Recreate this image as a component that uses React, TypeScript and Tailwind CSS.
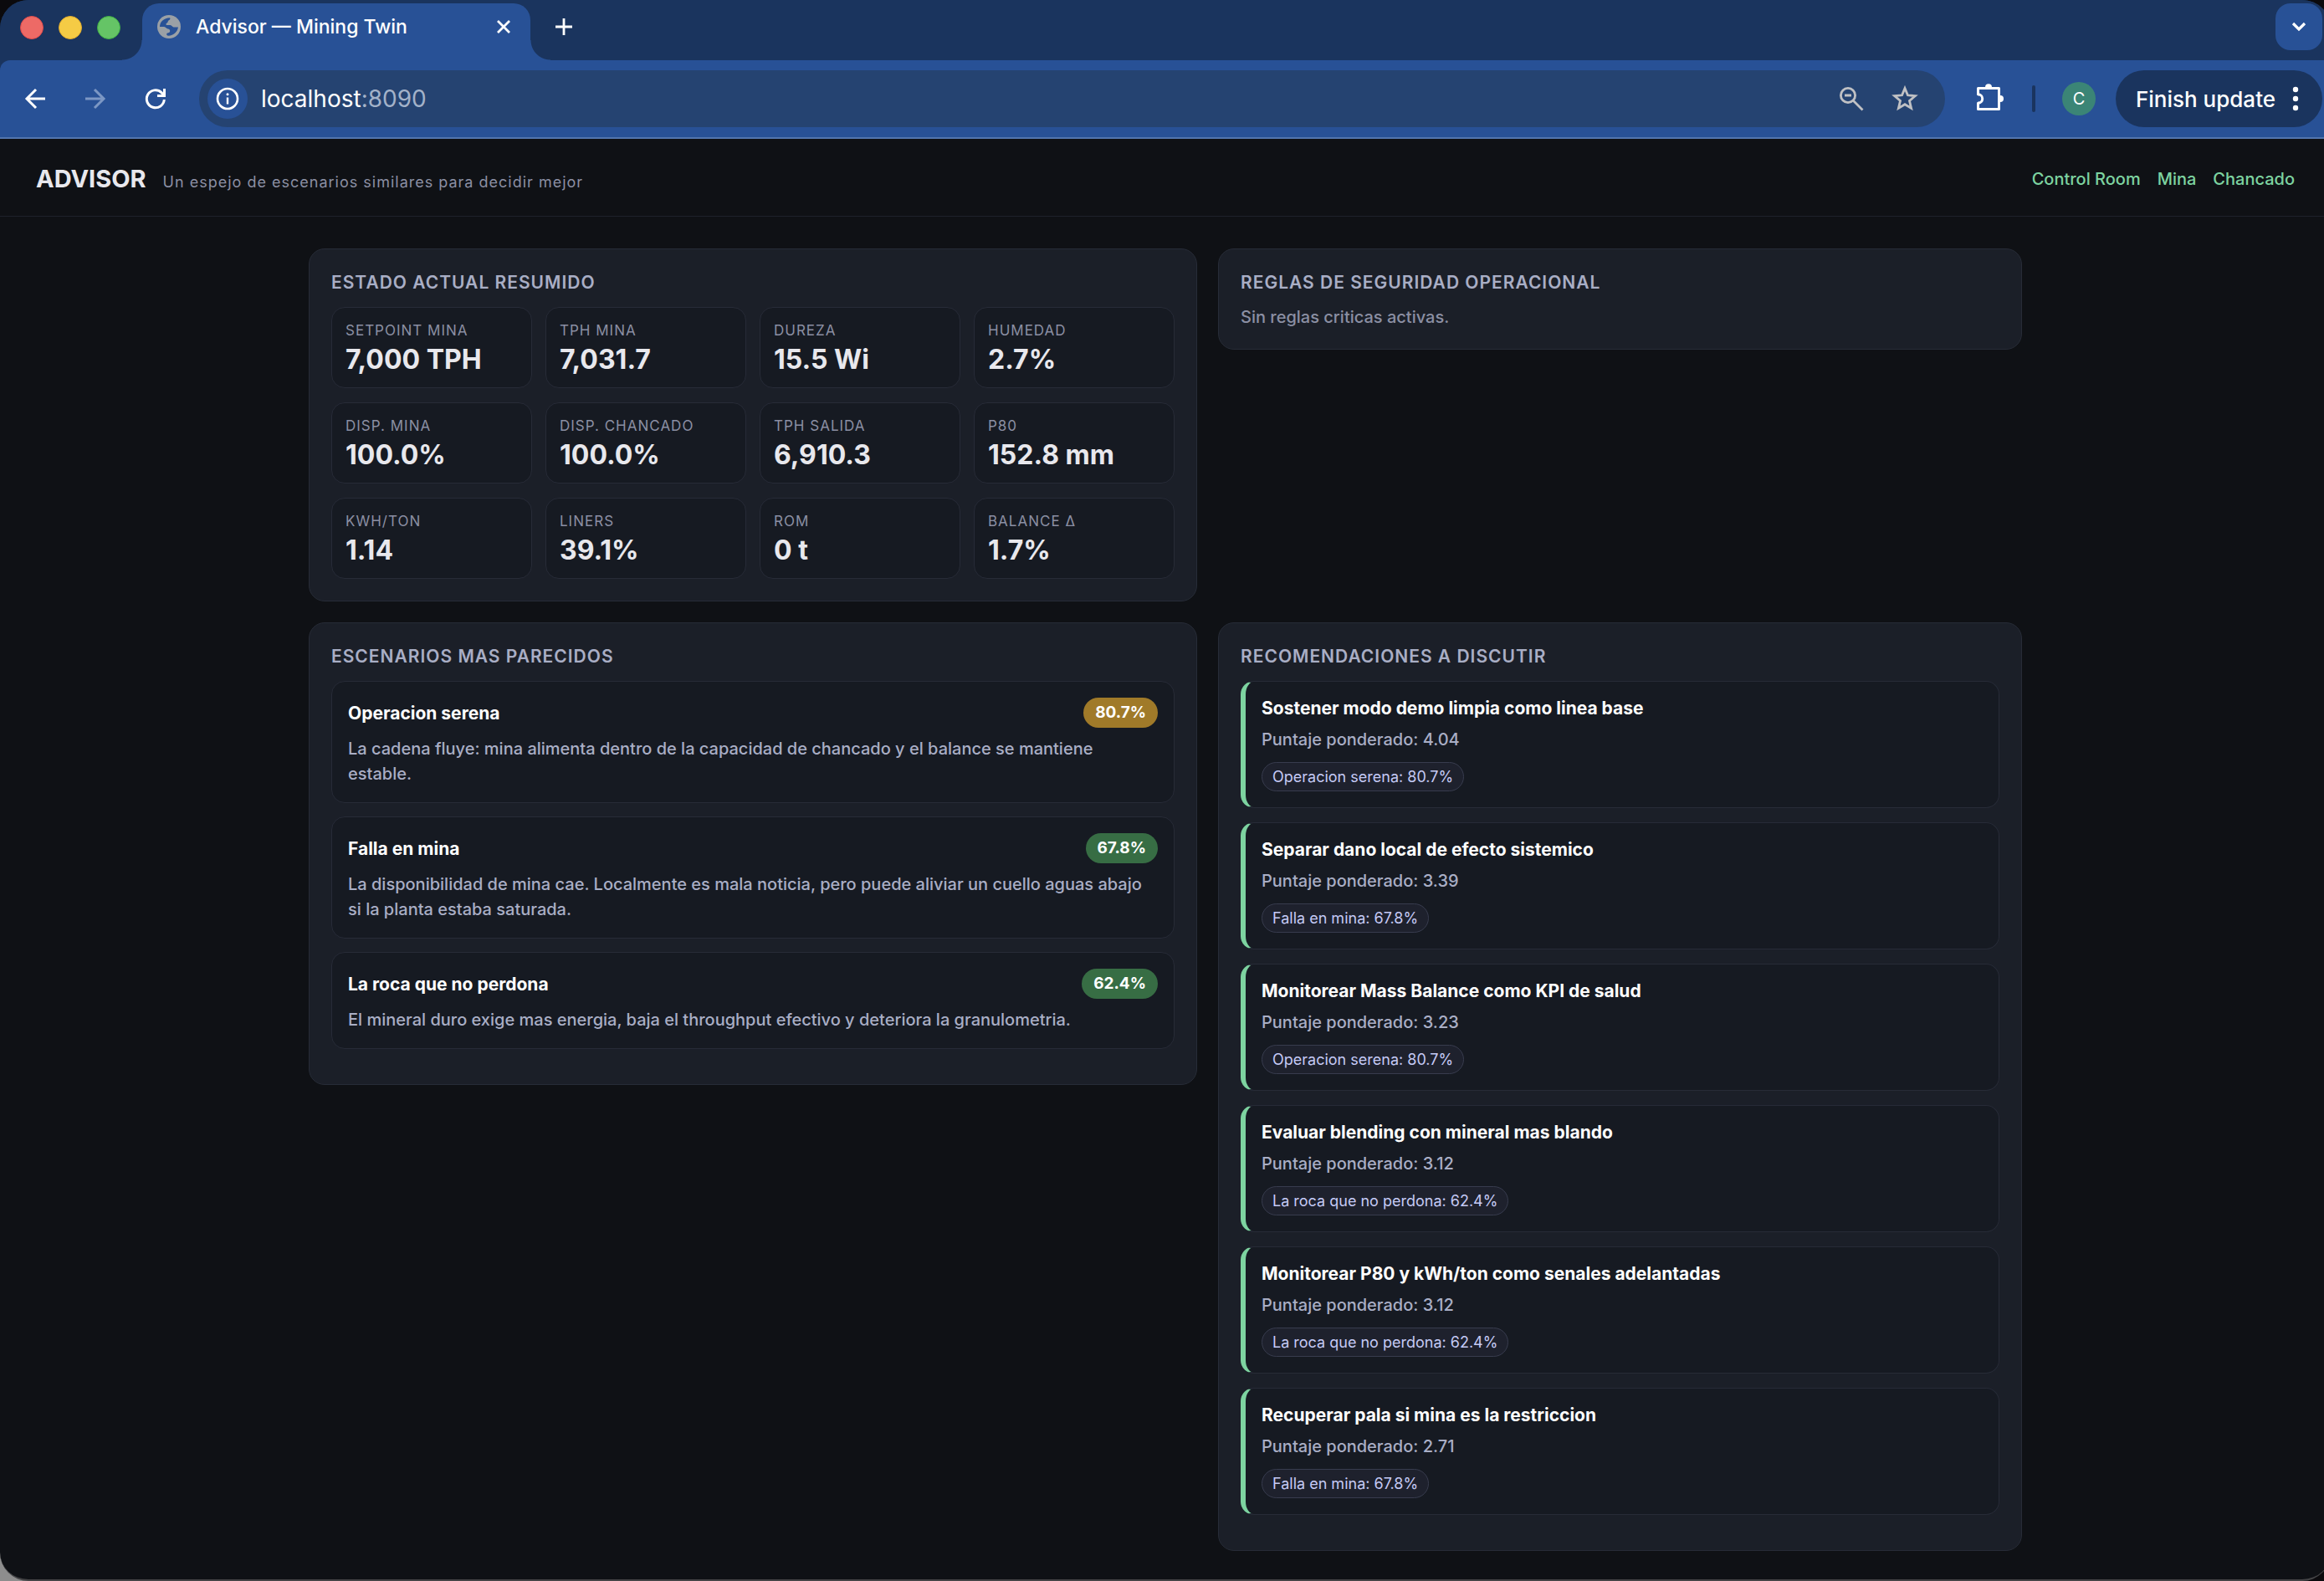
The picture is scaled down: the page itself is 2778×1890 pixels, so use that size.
import { clsx } from "clsx";
import type { ReactNode } from "react";

type Metric = { label: string; value: string };

type Scenario = {
  name: string;
  match: string;
  description: string;
  tone: "warn" | "ok";
};

type Recommendation = { title: string; score: string; source: string };

const METRICS: Metric[] = [
  { label: "Setpoint mina", value: "7,000 TPH" },
  { label: "TPH mina", value: "7,031.7" },
  { label: "Dureza", value: "15.5 Wi" },
  { label: "Humedad", value: "2.7%" },
  { label: "Disp. mina", value: "100.0%" },
  { label: "Disp. chancado", value: "100.0%" },
  { label: "TPH salida", value: "6,910.3" },
  { label: "P80", value: "152.8 mm" },
  { label: "kWh/ton", value: "1.14" },
  { label: "Liners", value: "39.1%" },
  { label: "ROM", value: "0 t" },
  { label: "Balance Δ", value: "1.7%" },
];

const SCENARIOS: Scenario[] = [
  {
    name: "Operacion serena",
    match: "80.7%",
    description:
      "La cadena fluye: mina alimenta dentro de la capacidad de chancado y el balance se mantiene estable.",
    tone: "warn",
  },
  {
    name: "Falla en mina",
    match: "67.8%",
    description:
      "La disponibilidad de mina cae. Localmente es mala noticia, pero puede aliviar un cuello aguas abajo si la planta estaba saturada.",
    tone: "ok",
  },
  {
    name: "La roca que no perdona",
    match: "62.4%",
    description:
      "El mineral duro exige mas energia, baja el throughput efectivo y deteriora la granulometria.",
    tone: "ok",
  },
];

const RECOMMENDATIONS: Recommendation[] = [
  {
    title: "Sostener modo demo limpia como linea base",
    score: "4.04",
    source: "Operacion serena: 80.7%",
  },
  {
    title: "Separar dano local de efecto sistemico",
    score: "3.39",
    source: "Falla en mina: 67.8%",
  },
  {
    title: "Monitorear Mass Balance como KPI de salud",
    score: "3.23",
    source: "Operacion serena: 80.7%",
  },
  {
    title: "Evaluar blending con mineral mas blando",
    score: "3.12",
    source: "La roca que no perdona: 62.4%",
  },
  {
    title: "Monitorear P80 y kWh/ton como senales adelantadas",
    score: "3.12",
    source: "La roca que no perdona: 62.4%",
  },
  {
    title: "Recuperar pala si mina es la restriccion",
    score: "2.71",
    source: "Falla en mina: 67.8%",
  },
];

function IconButton({
  label,
  className,
  children,
}: {
  label: string;
  className?: string;
  children: ReactNode;
}) {
  return (
    <button
      type="button"
      aria-label={label}
      className={clsx("flex shrink-0 items-center justify-center", className)}
    >
      {children}
    </button>
  );
}

function GlobeIcon() {
  return (
    <svg viewBox="0 0 28 28" className="size-7 shrink-0" aria-hidden="true">
      <circle cx="14" cy="14" r="14" fill="#9aa0a6" />
      <path
        d="M3 14C3 8 8 3.500 15 3.200c1 .8.2 2.500-1.500 3.300-1 .5-.5 2.500-2 3-1 .4-1.500 1.500-.5 2.500h4.500c2 0 2.500 2.500 4 2.500H25C24 20 20 24.500 13 24.800c-2-.3-2.500-2.500-.8-3.300 1.500-.6 3-.5 3-2.500 0-1.500-1-2.500-2.500-2.500-2 0-2.500-2.500-4.500-2.500z"
        fill="#285196"
      />
    </svg>
  );
}

function TabStrip() {
  return (
    <div className="flex h-[72px] items-start bg-[#1a345e]">
      <div className="flex h-[66px] w-[170px] shrink-0 items-center gap-[18px] pl-6">
        <span className="size-7 rounded-full border border-[#e04b4b] bg-[#ed6a66]" />
        <span className="size-7 rounded-full border border-[#dfa92c] bg-[#f5cb45]" />
        <span className="size-7 rounded-full border border-[#3fae45] bg-[#65c466]" />
      </div>
      <div className="relative mt-1 flex h-[68px] w-[464px] shrink-0 items-start rounded-t-[20px] bg-[#285196]">
        {/* Flares that join the tab to the toolbar */}
        <span className="absolute -left-6 bottom-0 size-6 bg-[radial-gradient(circle_at_0_0,transparent_23px,#285196_24px)]" />
        <span className="absolute -right-6 bottom-0 size-6 bg-[radial-gradient(circle_at_100%_0,transparent_23px,#285196_24px)]" />
        <div className="flex h-14 w-full items-center pr-5 pl-[18px]">
          <GlobeIcon />
          <span className="ml-[18px] flex-1 text-[23px] font-medium text-white">
            Advisor — Mining Twin
          </span>
          <IconButton label="Close tab" className="size-6">
            <svg viewBox="0 0 24 24" className="size-6" aria-hidden="true">
              <path d="M5 5l14 14M19 5L5 19" stroke="#fff" strokeWidth="2.8" />
            </svg>
          </IconButton>
        </div>
      </div>
      <IconButton label="New tab" className="mt-4 ml-6 size-8">
        <svg viewBox="0 0 32 32" className="size-8" aria-hidden="true">
          <path d="M16 6v20M6 16h20" stroke="#fff" strokeWidth="2.8" />
        </svg>
      </IconButton>
      <IconButton
        label="Search tabs"
        className="mt-1 mr-[10px] ml-auto size-14 rounded-[18px] bg-[#285196]"
      >
        <svg viewBox="0 0 24 24" className="size-6" aria-hidden="true">
          <path d="M5 8l7 7 7-7" fill="none" stroke="#fff" strokeWidth="3.200" />
        </svg>
      </IconButton>
    </div>
  );
}

function Toolbar() {
  return (
    <div className="flex h-[94px] items-center rounded-tl-[12px] border-b-2 border-[#5275ae] bg-[#285196] pr-[10px] pl-[26px]">
      <div className="flex items-center gap-10">
        <IconButton label="Back" className="size-8">
          <svg viewBox="0 0 32 32" className="size-8" aria-hidden="true">
            <path d="M28 16H6M17 5L6 16l11 11" fill="none" stroke="#fff" strokeWidth="3" />
          </svg>
        </IconButton>
        <IconButton label="Forward" className="size-8">
          <svg viewBox="0 0 32 32" className="size-8" aria-hidden="true">
            <path d="M4 16h22M15 5l11 11-11 11" fill="none" stroke="#7c97c4" strokeWidth="3" />
          </svg>
        </IconButton>
        <IconButton label="Reload" className="size-8">
          <svg viewBox="0 0 32 32" className="size-8" aria-hidden="true">
            <path d="M26.300 17a10.500 10.500 0 1 1-3.300-8.400l3 3.400" fill="none" stroke="#fff" strokeWidth="3" />
            <path d="M26.500 4v8.500H18" fill="none" stroke="#fff" strokeWidth="3" />
          </svg>
        </IconButton>
      </div>

      <div className="ml-9 flex h-[68px] flex-1 items-center rounded-full bg-[#254371] pr-8 pl-[10px]">
        <IconButton label="Site information" className="size-12 rounded-full bg-[#285196]">
          <svg viewBox="0 0 28 28" className="size-7" aria-hidden="true">
            <circle cx="14" cy="14" r="12" fill="none" stroke="#fff" strokeWidth="2.600" />
            <path d="M14 12.500v8" stroke="#fff" strokeWidth="2.400" />
            <circle cx="14" cy="8.800" r="1.500" fill="#fff" />
          </svg>
        </IconButton>
        <p className="ml-4 flex-1 text-[28px] text-white">
          localhost<span className="text-[#a3b2c9]">:8090</span>
        </p>
        <IconButton label="Zoom out" className="mr-8 size-8">
          <svg viewBox="0 0 32 32" className="size-8" aria-hidden="true">
            <g fill="none" stroke="#c0c1c4" strokeWidth="2.800">
              <circle cx="12" cy="12" r="8.600" />
              <path d="M18 18l11.500 11.500M8 12h8" />
            </g>
          </svg>
        </IconButton>
        <IconButton label="Bookmark this tab" className="size-8">
          <svg viewBox="0 0 32 32" className="size-8" aria-hidden="true">
            <path
              d="M16 3.500l3.400 8.300 9 .8-6.900 5.900 2.100 8.900-7.600-4.700-7.600 4.700 2.100-8.900-6.900-5.900 9-.8z"
              fill="none"
              stroke="#c0c1c4"
              strokeWidth="2.800"
            />
          </svg>
        </IconButton>
      </div>

      <IconButton label="Extensions" className="ml-[34px] size-10">
        <svg viewBox="0 0 40 40" className="size-10" aria-hidden="true">
          <path
            d="M5.500 7.500h25v25h-25v-7.300a5.200 5.200 0 0 0 0-10.400z"
            fill="none"
            stroke="#fff"
            strokeWidth="3"
            strokeLinejoin="round"
          />
          <circle cx="18" cy="6.200" r="4" fill="#fff" />
          <circle cx="32" cy="20" r="4" fill="#fff" />
          <path d="M7 9h22v22H7z" fill="#285196" />
          <path d="M5.500 14.800a5.200 5.200 0 0 1 0 10.400" fill="none" stroke="#fff" strokeWidth="3" />
        </svg>
      </IconButton>
      <span className="ml-[30px] h-8 w-1 rounded-full bg-[#1a345e]" />
      <button
        type="button"
        aria-label="Profile"
        className="ml-8 flex size-10 items-center justify-center rounded-full bg-[#3b8576] text-[20px] text-white"
      >
        C
      </button>
      <button
        type="button"
        className="ml-6 flex h-[68px] items-center gap-[14px] rounded-full bg-[#1a345e] pr-[22px] pl-6 text-[26px] font-medium text-white"
      >
        Finish update
        <svg viewBox="0 0 20 32" className="h-8 w-5" aria-hidden="true">
          <g fill="#fff">
            <circle cx="10" cy="5" r="3.200" />
            <circle cx="10" cy="16" r="3.200" />
            <circle cx="10" cy="27" r="3.200" />
          </g>
        </svg>
      </button>
    </div>
  );
}

function Panel({ title, children }: { title: string; children: ReactNode }) {
  return (
    <section className="rounded-[19px] border border-[#272c37] bg-[#1b1f28] p-[26px]">
      <h2 className="mb-4 pt-px text-[21px] leading-[26px] font-semibold tracking-[1px] text-[#a9aec5] uppercase">
        {title}
      </h2>
      {children}
    </section>
  );
}

function MetricCard({ label, value }: Metric) {
  return (
    <div className="h-[97px] rounded-[16px] border border-[#272b37] bg-[#161a22] px-4 pt-4">
      <dt className="text-[17px] leading-[22px] tracking-[1px] text-[#8b8fa3] uppercase">
        {label}
      </dt>
      <dd className="mt-[5px] text-[32px] leading-[38px] font-bold text-[#e8e8ed]">{value}</dd>
    </div>
  );
}

function ScenarioCard({ name, match, description, tone }: Scenario) {
  return (
    <article className="rounded-[16px] border border-[#272b37] bg-[#161a22] p-[19px]">
      <div className="flex items-center justify-between">
        <h3 className="pt-0.5 text-[21px] leading-[26px] font-bold text-white">{name}</h3>
        <span
          className={clsx(
            "rounded-full px-[14px] text-[19px] leading-9 font-bold text-white",
            tone === "warn" ? "bg-[#a07a29]" : "bg-[#376d44]",
          )}
        >
          {match}
        </span>
      </div>
      <p className="mt-[10px] text-[20px] leading-[30px] font-medium text-[#a9aec5]">
        {description}
      </p>
    </article>
  );
}

function RecommendationCard({ title, score, source }: Recommendation) {
  return (
    <article className="rounded-[16px] border border-l-[6px] border-[#272b37] border-l-[#7dd3a0] bg-[#161a22] p-[19px]">
      <h3 className="text-[21px] leading-[26px] font-bold text-white">{title}</h3>
      <p className="mt-[9px] text-[20px] leading-[30px] font-medium text-[#a9aec5]">
        Puntaje ponderado: {score}
      </p>
      <div className="mt-3 flex">
        <span className="rounded-full border border-[#383c4e] bg-[#1e212d] px-3 text-[18px] leading-[33px] text-[#c5caf5]">
          {source}
        </span>
      </div>
    </article>
  );
}

export default function App() {
  return (
    <div className="min-h-screen overflow-hidden bg-[linear-gradient(45deg,#8d8d8d_40px,#0b0a0d_41px)] font-['Inter','Liberation_Sans',sans-serif]">
      {/* The window runs slightly past the right edge of the screen */}
      <div className="flex min-h-screen w-[calc(100%+8px)] flex-col overflow-hidden rounded-[34px] border-b-2 border-[#444446] bg-[#0f1115]">
        <div className="bg-[#1a345e]">
          <TabStrip />
          <Toolbar />
        </div>

        <header className="flex h-[93px] items-center justify-between border-b border-[#1f222b] px-[43px] pt-1">
          <div className="flex items-baseline gap-5">
            <h1 className="text-[29px] font-bold text-[#e8e8ed]">ADVISOR</h1>
            <p className="text-[18px] tracking-[1px] text-[#8b8fa3]">
              Un espejo de escenarios similares para decidir mejor
            </p>
          </div>
          <nav className="flex gap-5 text-[20px] font-medium text-[#7dd3a0]">
            <a href="#control-room">Control Room</a>
            <a href="#mina">Mina</a>
            <a href="#chancado">Chancado</a>
          </nav>
        </header>

        <main className="mx-auto grid w-full max-w-[2048px] grid-cols-[1062fr_961fr] items-start gap-[25px] pt-[38px] pb-[34px]">
          <Panel title="Estado actual resumido">
            <dl className="grid grid-cols-4 gap-x-4 gap-y-[17px]">
              {METRICS.map((metric) => (
                <MetricCard key={metric.label} {...metric} />
              ))}
            </dl>
          </Panel>

          <Panel title="Reglas de seguridad operacional">
            <p className="text-[20px] leading-6 font-medium text-[#8b8fa3]">
              Sin reglas criticas activas.
            </p>
          </Panel>

          <Panel title="Escenarios mas parecidos">
            <div className="flex flex-col gap-4 pb-4">
              {SCENARIOS.map((scenario) => (
                <ScenarioCard key={scenario.name} {...scenario} />
              ))}
            </div>
          </Panel>

          <Panel title="Recomendaciones a discutir">
            <div className="flex flex-col gap-[17px] pb-4">
              {RECOMMENDATIONS.map((recommendation) => (
                <RecommendationCard key={recommendation.title} {...recommendation} />
              ))}
            </div>
          </Panel>
        </main>
      </div>
    </div>
  );
}
